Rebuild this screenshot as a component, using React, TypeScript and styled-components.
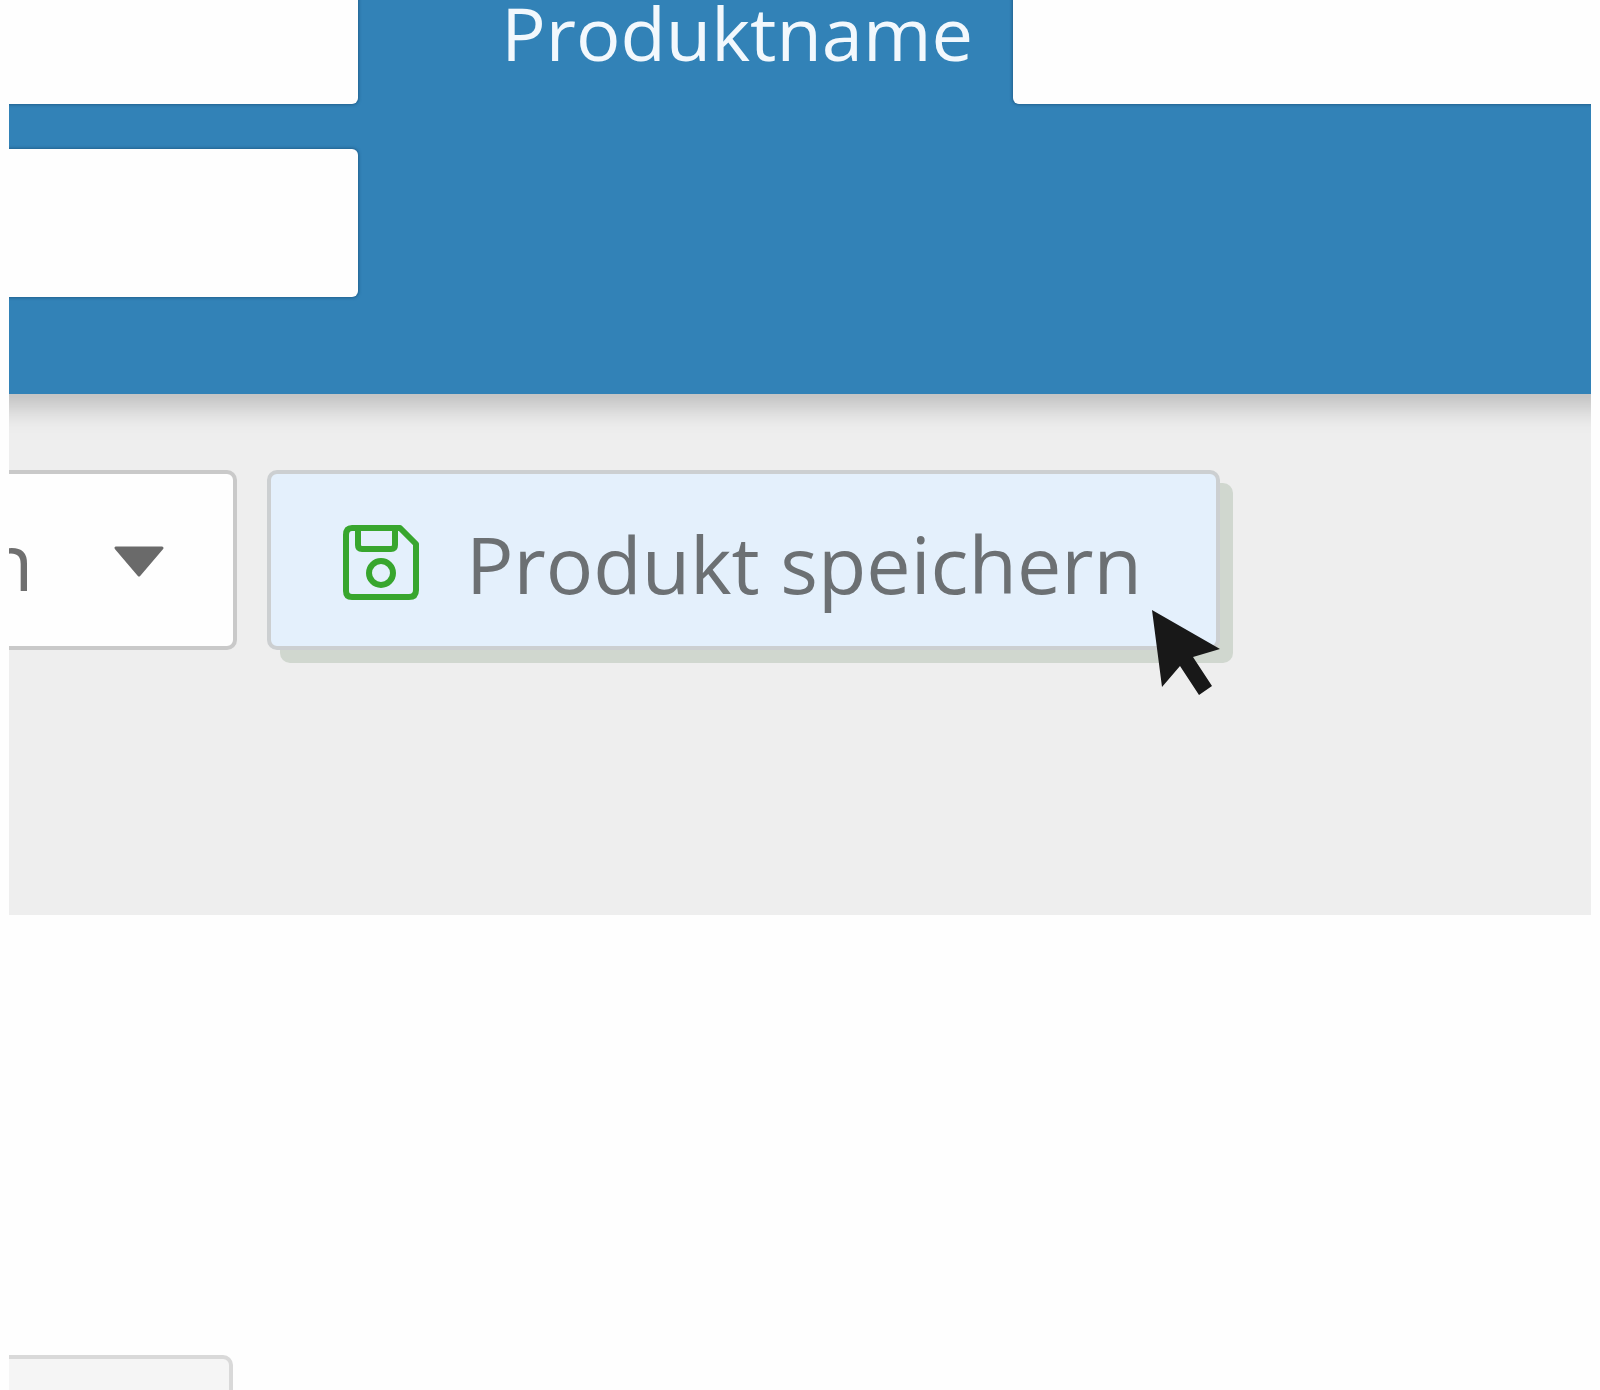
import React from 'react';
import styled, { createGlobalStyle } from 'styled-components';

const GlobalStyle = createGlobalStyle`
  *, *::before, *::after { box-sizing: border-box; }
  body {
    margin: 0;
    background: #fefefe;
    font-family: 'Open Sans', 'Noto Sans', sans-serif;
  }
`;

const Page = styled.main`
  height: 100vh;
  margin: 0 9px;
  overflow: hidden;
`;

/* The sheet bleeds past both sides of the page, so its fields run off the edge. */
const Sheet = styled.div`
  margin: 0 -28px;
`;

const Header = styled.header`
  position: relative;
  display: grid;
  grid-template-columns: 377px 655px 1fr;
  row-gap: 45px;
  margin-top: -44px;
  padding-bottom: 97px;
  background: #3282b7;
  box-shadow: 0 14px 24px rgba(0, 0, 0, 0.2);
`;

const HeaderField = styled.input`
  width: 100%;
  height: 148px;
  border: 0;
  border-radius: 6px;
  background: #fefefe;
  box-shadow: 0 0 3px 1px #22628f;
  font: inherit;
  font-size: 74px;
  outline: none;
`;

const HeaderLabel = styled.label`
  padding: 6px 40px 0 0;
  color: #f2f8fd;
  font-size: 74px;
  font-weight: 500;
  line-height: 142px;
  text-align: right;
`;

const Toolbar = styled.section`
  display: flex;
  align-items: flex-start;
  gap: 30px;
  padding: 76px 0 265px;
  background: #eeeeee;
`;

const SelectBox = styled.div`
  position: relative;
  width: 256px;
`;

const Select = styled.select`
  appearance: none;
  width: 100%;
  height: 180px;
  padding: 0;
  border: 4px solid #c9c9c9;
  border-radius: 10px;
  background: #fefefe;
  color: #6f6f6f;
  font: inherit;
  font-size: 79px;
`;

const Arrow = styled.svg`
  position: absolute;
  top: 76px;
  right: 72px;
  pointer-events: none;
`;

const SaveBox = styled.div`
  position: relative;
`;

const SaveButton = styled.button`
  display: flex;
  align-items: center;
  gap: 46px;
  height: 180px;
  padding: 6px 74px 0 71px;
  border: 4px solid #cccfd1;
  border-radius: 10px;
  background: #e4f0fc;
  box-shadow: 13px 13px 0 #d0d7cf;
  color: #6c7073;
  font: inherit;
  font-size: 79px;
  white-space: nowrap;
`;

const Pointer = styled.svg`
  position: absolute;
  top: 140px;
  right: 0;
  pointer-events: none;
`;

const Body = styled.section`
  padding-top: 440px;
`;

const MutedField = styled.input`
  width: 252px;
  height: 180px;
  border: 4px solid #d9d9d9;
  border-radius: 10px;
  background: #f5f5f5;
`;

function SaveIcon() {
  return (
    <svg width="78" height="76" viewBox="0 0 78 76" fill="none" stroke="#38a62e" strokeWidth="6" strokeLinejoin="round" aria-hidden="true">
      <path d="M10 3H58L74 19V65Q74 72 67 72H10Q4 72 4 66V10Q4 3 10 3Z" />
      <path d="M16 4V20Q16 24 20 24H49Q53 24 53 20V4" />
      <circle cx="39" cy="48" r="12" />
    </svg>
  );
}

export default function App() {
  return (
    <Page>
      <GlobalStyle />
      <Sheet>
        <Header>
          <HeaderField aria-label="Nummer" />
          <HeaderLabel htmlFor="name">Produktname</HeaderLabel>
          <HeaderField id="name" />
          <HeaderField aria-label="Kategorie" />
        </Header>
        <Toolbar>
          <SelectBox>
            <Select aria-label="Aktion">
              <option>n</option>
            </Select>
            <Arrow width="52" height="32" viewBox="0 0 52 32" aria-hidden="true">
              <path d="M3 2H49L26 29Z" fill="#6a6a6a" stroke="#6a6a6a" strokeWidth="3" strokeLinejoin="round" />
            </Arrow>
          </SelectBox>
          <SaveBox>
            <SaveButton type="button">
              <SaveIcon />
              Produkt speichern
            </SaveButton>
            <Pointer width="68" height="85" viewBox="0 0 68 85" aria-hidden="true">
              <path d="M0 0L68 39L41 47L60 76L47 85L28 56L10 77Z" fill="#181818" />
            </Pointer>
          </SaveBox>
        </Toolbar>
        <Body>
          <MutedField aria-label="Auswahl" readOnly />
        </Body>
      </Sheet>
    </Page>
  );
}
